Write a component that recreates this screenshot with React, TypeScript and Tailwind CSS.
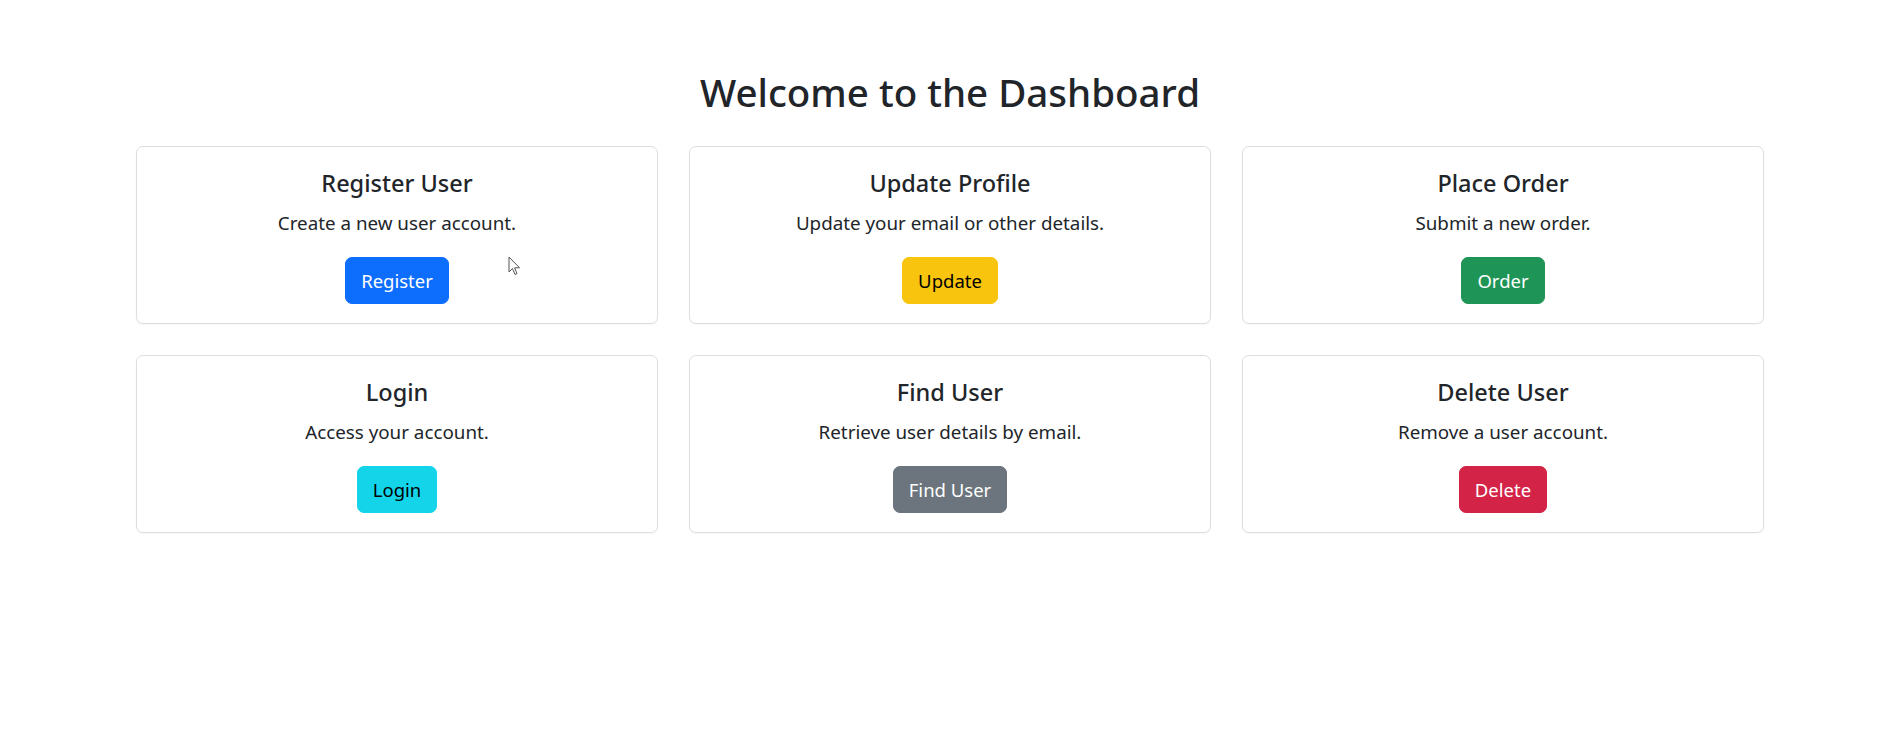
const actions = [
    { title: "Register User", text: "Create a new user account.", label: "Register", btn: "bg-[#0d6efd] border-[#0d6efd] text-white" },
    { title: "Update Profile", text: "Update your email or other details.", label: "Update", btn: "bg-[#f8c40d] border-[#f8c40d] text-[#000]" },
    { title: "Place Order", text: "Submit a new order.", label: "Order", btn: "bg-[#1e9556] border-[#1e9556] text-white" },
    { title: "Login", text: "Access your account.", label: "Login", btn: "bg-[#14d4ea] border-[#14d4ea] text-[#000]" },
    { title: "Find User", text: "Retrieve user details by email.", label: "Find User", btn: "bg-[#6c757d] border-[#6c757d] text-white" },
    { title: "Delete User", text: "Remove a user account.", label: "Delete", btn: "bg-[#d32346] border-[#d32346] text-white" },
];

function Cursor() {
    return (
        <svg className="absolute left-[508px] top-[256px] pointer-events-none" width="13" height="20" viewBox="0 0 13 20">
            <path d="M1 1 L1 16 L4.5 12.5 L7 18.5 L9 17.6 L6.6 11.8 L11.5 11.8 Z" fill="#fff" stroke="#555" strokeWidth="1" strokeLinejoin="round" />
        </svg>
    );
}

export default function App() {
    return (
        <div className="relative min-h-screen bg-white text-[#212529] font-['Noto_Sans','Liberation_Sans',sans-serif]">
            <div className="mx-auto w-[1628px] pt-[68px]">
                <h2 className="text-center text-[38.5px] leading-[48px] font-medium mb-[30px]">Welcome to the Dashboard</h2>

                <div className="grid grid-cols-3 gap-[31px]">
                    {actions.map((a) => (
                        <div key={a.title} className="rounded-[7px] border border-[#dedede] bg-white px-5 pt-[21px] pb-[19px] text-center shadow-[0_1px_2px_rgba(0,0,0,0.04)]">
                            <h5 className="text-[23.5px] leading-[30px] font-medium mb-[10px]">{a.title}</h5>
                            <p className="text-[18.8px] leading-[30px] mb-[19px]">{a.text}</p>
                            <button className={`inline-block rounded-[7px] border px-[15px] py-[7.5px] text-[18.5px] leading-[30px] ${a.btn}`}>
                                {a.label}
                            </button>
                        </div>
                    ))}
                </div>
            </div>
            <Cursor />
        </div>
    );
}
